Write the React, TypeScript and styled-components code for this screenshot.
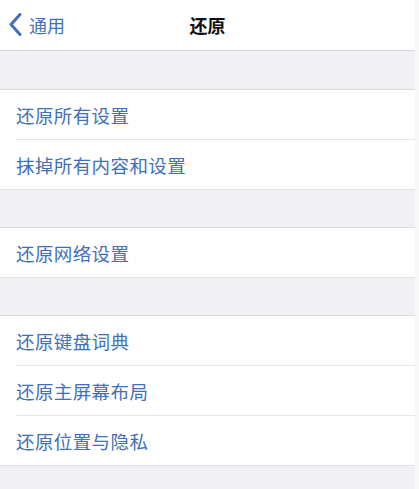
import styled, { createGlobalStyle } from 'styled-components';

const GlobalStyle = createGlobalStyle`
  html, body {
    margin: 0;
    padding: 0;
    background: #f8f8f9;
  }
  body {
    font-family: "Noto Sans CJK SC", "Noto Sans", sans-serif;
  }
`;

const Screen = styled.div`
  width: 415px;
  height: 489px;
  background: #f1f1f5;
  overflow: hidden;
`;

const NavBar = styled.header`
  position: relative;
  height: 50px;
  background: #ffffff;
  border-bottom: 1px solid #d9d9dd;
  display: flex;
  align-items: center;
  justify-content: center;
`;

const BackButton = styled.div`
  position: absolute;
  left: 9px;
  top: 0;
  bottom: 0;
  display: flex;
  align-items: center;
  gap: 7px;
  color: #3f70b8;
  font-size: 18px;
  padding-bottom: 1px;
`;

const Title = styled.h1`
  margin: 0;
  font-size: 18px;
  font-weight: 700;
  color: #111111;
  padding-bottom: 1px;
`;

const Gap = styled.div<{ $h: number }>`
  height: ${({ $h }) => $h}px;
`;

const Group = styled.ul`
  list-style: none;
  margin: 0;
  padding: 0;
  background: #ffffff;
  border-top: 1px solid #dcdce0;
  border-bottom: 1px solid #e2e2e6;
`;

const Row = styled.li`
  height: 49px;
  padding-left: 16px;
  display: flex;
  align-items: center;
  color: #3f70b8;
  font-size: 18.5px;
  letter-spacing: 0.4px;

  & + & {
    border-top: 1px solid #e6e6ea;
    margin-left: 16px;
    padding-left: 0;
  }
`;

const Chevron = () => (
  <svg width="13" height="23" viewBox="0 0 13 23" fill="none">
    <path
      d="M11 1.5L2 11.5L11 21.5"
      stroke="#3f70b8"
      strokeWidth="3"
      strokeLinecap="round"
      strokeLinejoin="round"
    />
  </svg>
);

const groups: string[][] = [
  ['还原所有设置', '抹掉所有内容和设置'],
  ['还原网络设置'],
  ['还原键盘词典', '还原主屏幕布局', '还原位置与隐私'],
];

export default function App() {
  return (
    <>
      <GlobalStyle />
      <Screen>
        <NavBar>
          <BackButton>
            <Chevron />
            <span>通用</span>
          </BackButton>
          <Title>还原</Title>
        </NavBar>
        {groups.map((items, i) => (
          <div key={i}>
            <Gap $h={i === 0 ? 38 : 37} />
            <Group>
              {items.map((label) => (
                <Row key={label}>{label}</Row>
              ))}
            </Group>
          </div>
        ))}
      </Screen>
    </>
  );
}
